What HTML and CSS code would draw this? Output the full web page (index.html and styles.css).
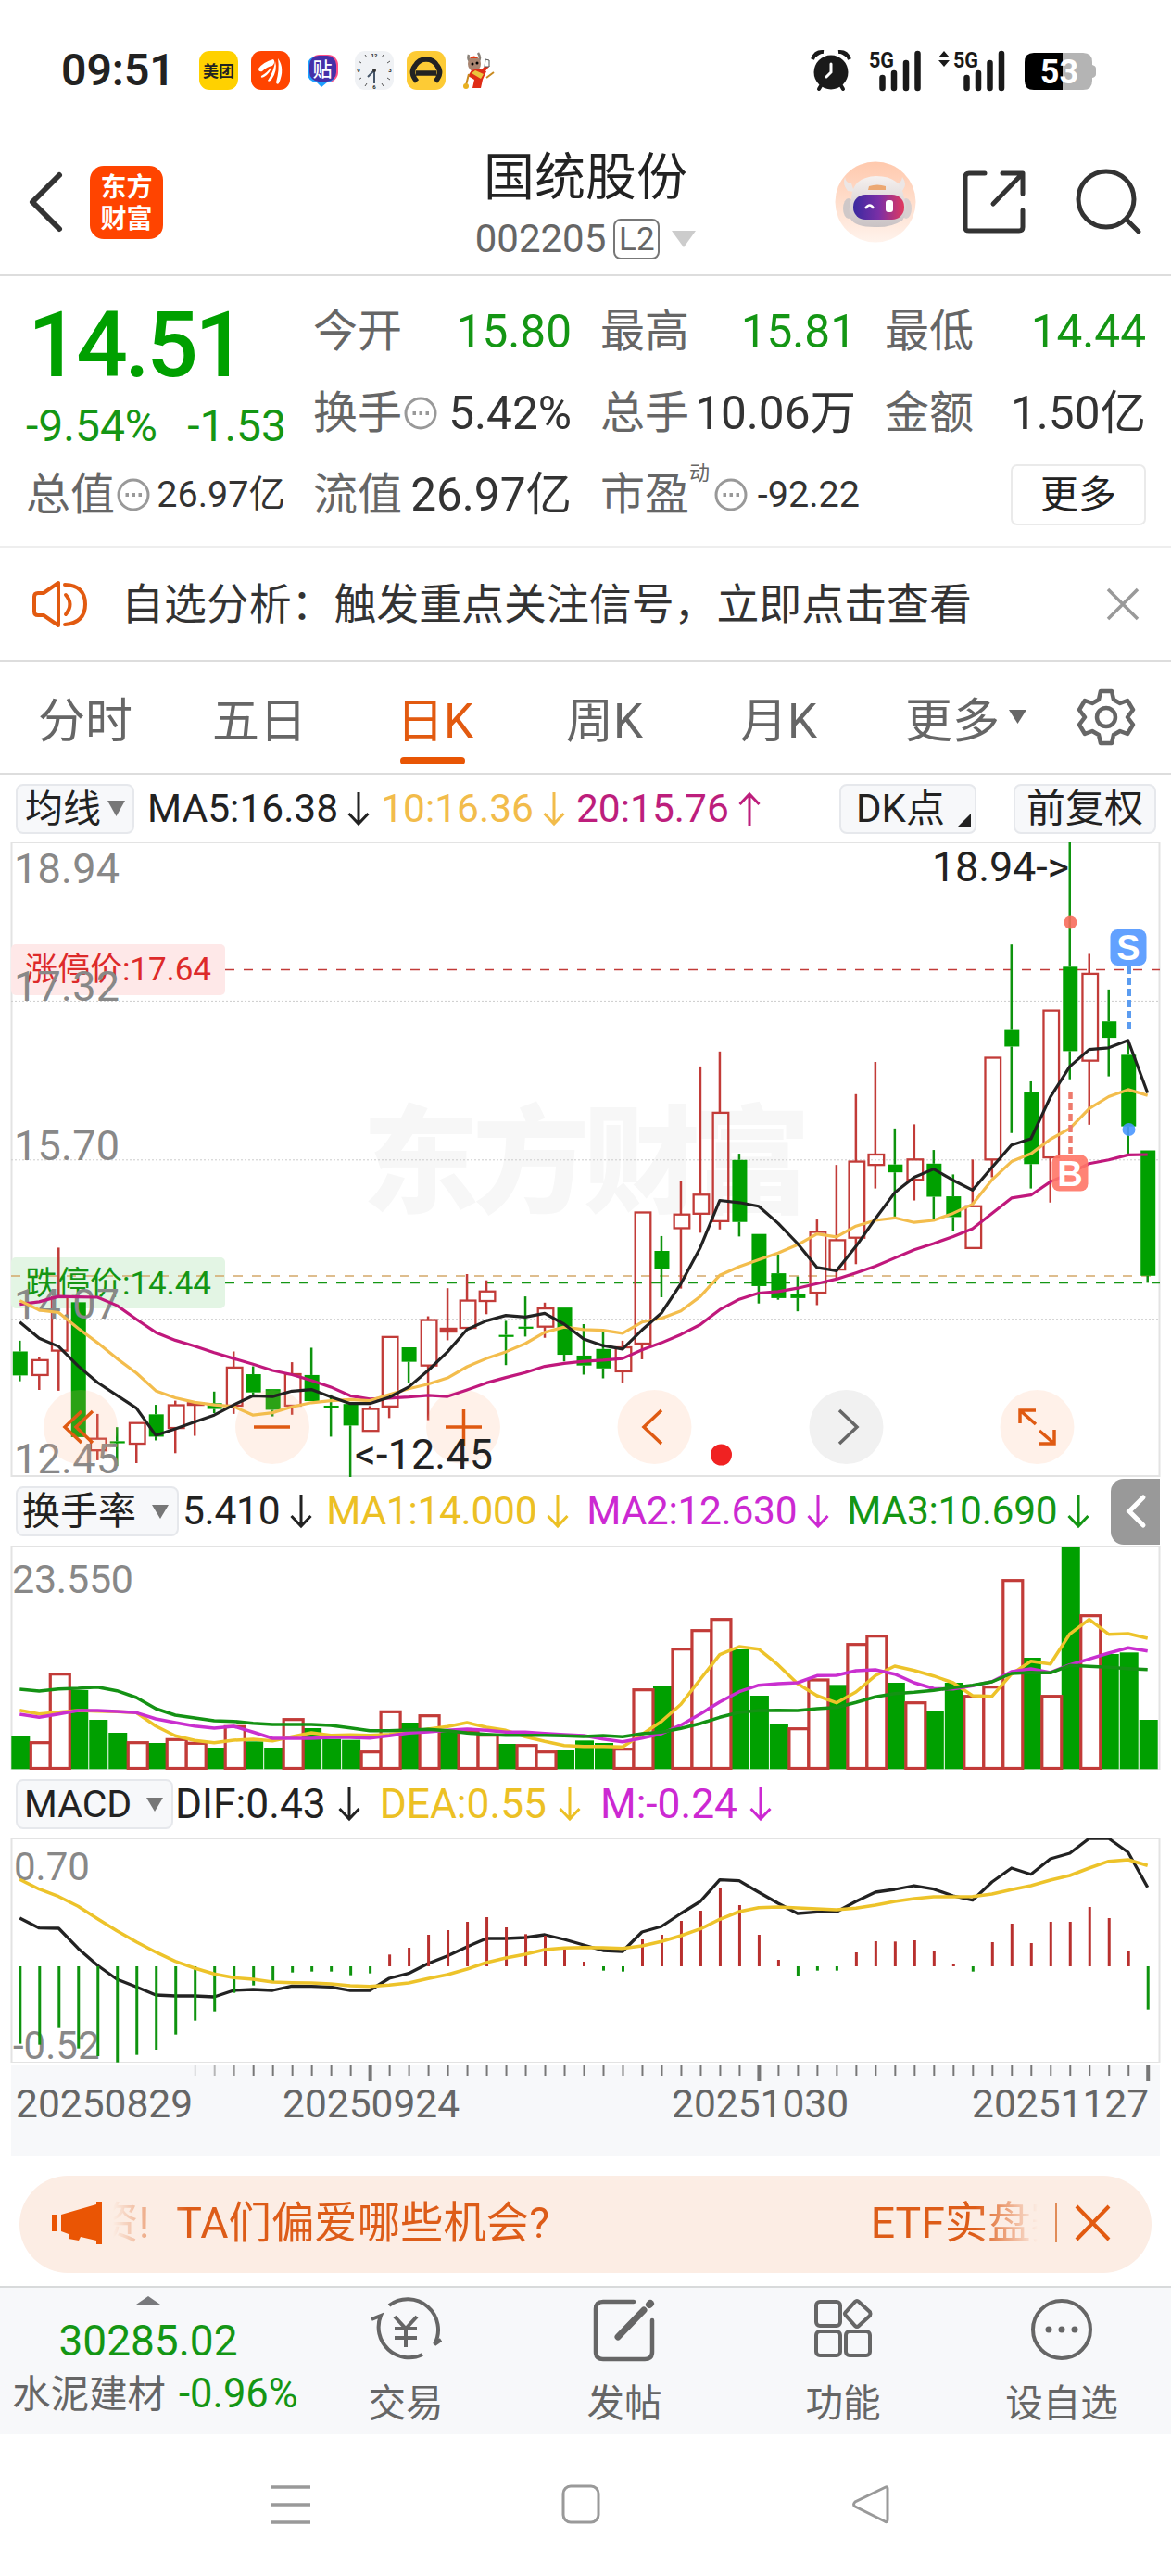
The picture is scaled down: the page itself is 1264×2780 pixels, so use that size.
FILE: index.html
```html
<!DOCTYPE html>
<html lang="zh-CN">
<head>
<meta charset="utf-8">
<title>国统股份 002205</title>
<link rel="stylesheet" href="styles.css">
</head>
<body>
<div class="status">
  <span class="clock">09:51</span>
  <div class="notices">
    <svg width="42" height="42"><rect width="42" height="42" rx="11" fill="#ffd100"/><text x="21" y="27.500" class="cjk" font-size="17" font-weight="700" text-anchor="middle" fill="#222">美团</text></svg>
    <svg width="42" height="42"><rect width="42" height="42" rx="11" fill="#ff4400"/><path d="M8 19Q13 12 24 9Q27 12 23 16Q17 17 12 22Q8 23 8 19ZM29 8Q37 19 30 35Q28 37 27 34Q31 20 29 8ZM26 11Q29 21 22 31Q19 34 18 32Q25 21 26 11ZM22 17Q21 24 14 28Q10 30 11 27Q18 23 22 17Z" fill="#fff"/></svg>
    <svg width="42" height="42"><rect x="7" y="4" width="31" height="30" rx="11" fill="#ff4d86"/><path d="M5 16Q5 6 16 6H26Q35 6 35 16V24Q35 33 26 34L20 39L15 34Q5 33 5 24Z" fill="#1ea0ff"/><rect x="7" y="5" width="29" height="28" rx="10" fill="#4530a8"/><text x="21" y="27" class="cjk" font-size="21" font-weight="500" text-anchor="middle" fill="#fff">贴</text></svg>
    <svg width="42" height="42"><rect width="42" height="42" rx="11" fill="#f0f2f5"/><g stroke="#555" stroke-width="1"><path d="M11 4l2 3M31 4l-2 3M4 11l3 2M38 11l-3 2M4 31l3-2M38 31l-3-2M11 38l2-3M31 38l-2-3"/></g><g class="num" font-size="6" font-weight="700" text-anchor="middle" fill="#222"><text x="21" y="7">12</text><text x="38" y="23">3</text><text x="21" y="41">6</text><text x="4" y="23">9</text></g><path d="M21 21V35M21 21L14 28" stroke="#46566a" stroke-width="2"/><circle cx="21" cy="21" r="2" fill="#333"/></svg>
    <svg width="42" height="42"><rect width="42" height="42" rx="11" fill="#fdcb35"/><path d="M11 33Q3 24 9 16Q13 9 21 9Q29 9 33 16Q39 24 31 33M10 24H32" fill="none" stroke="#222" stroke-width="5.500"/></svg>
    <svg width="42" height="42"><path d="M11 4Q9 10 14 12M21 2Q25 8 21 12" fill="none" stroke="#8a8178" stroke-width="2.500"/><ellipse cx="17" cy="14" rx="7" ry="8" fill="#a98571"/><path d="M12 8Q17 3 21 8Z" fill="#e23a14"/><path d="M14 21Q23 18 30 22L26 31L24 40H15L17 31L10 27Z" fill="#df2c16"/><path d="M14 24L24 30L27 25L18 21Z" fill="#eac33e"/><path d="M26 22L32 15" stroke="#df2c16" stroke-width="4"/><path d="M29 9l4 1v7h-5z" fill="#fff" stroke="#555"/><path d="M30 29l8-6M8 37l3-12" stroke="#c88a20" stroke-width="2"/><circle cx="8" cy="38" r="3" fill="#e8b020"/><circle cx="15" cy="14" r="1.500"/><circle cx="20" cy="13" r="1.500"/></svg>
  </div>
  <div class="signals">
    <svg width="44" height="44"><circle cx="22" cy="24" r="18.500" fill="#1a1a1a"/><path d="M2 10Q5 1 14 2M42 10Q39 1 30 2" stroke="#1a1a1a" stroke-width="4" fill="#1a1a1a"/><path d="M12 37l-3 5M32 37l3 5" stroke="#1a1a1a" stroke-width="4" stroke-linecap="round"/><path d="M22 15v9l-5 5" fill="none" stroke="#fff" stroke-width="3" stroke-linecap="round"/></svg>
    <svg width="58" height="44"><text x="0" y="19" class="num" font-size="24" font-weight="700" textLength="27" lengthAdjust="spacingAndGlyphs" fill="#1a1a1a">5G</text><path d="M14.500 30v11M27 25v16M40 14v27M52.500 4v37" stroke="#1a1a1a" stroke-width="6.500" stroke-linecap="round"/></svg>
    <svg width="74" height="44"><path d="M0 8l6-7l6 7zM0 11l6 7l6-7z" fill="#1a1a1a"/><text x="16" y="19" class="num" font-size="24" font-weight="700" textLength="27" lengthAdjust="spacingAndGlyphs" fill="#1a1a1a">5G</text><path d="M30.500 30v11M43 25v16M55.500 14v27M68 4v37" stroke="#1a1a1a" stroke-width="6.500" stroke-linecap="round"/></svg>
    <svg class="battery" width="78" height="40"><path d="M10 0H41V40H10Q0 40 0 30V10Q0 0 10 0Z" fill="#000"/><path d="M41 0H63Q73 0 73 10V13Q77 14 77 17V23Q77 26 73 27V30Q73 40 63 40H41Z" fill="#b4b4b4"/><text x="37.500" y="33" class="num" font-size="36" font-weight="700" text-anchor="middle" fill="#fff">53</text></svg>
  </div>
</div>

<header class="header">
  <div class="header-left">
    <svg width="38" height="68"><path d="M34 5L5 34L34 63" fill="none" stroke="#333" stroke-width="6" stroke-linecap="round" stroke-linejoin="round"/></svg>
    <div class="logo"><span>东方</span><span>财富</span></div>
  </div>
  <div class="header-title">
    <h1>国统股份</h1>
    <div class="code"><span>002205</span><i>L2</i><svg width="26" height="18"><path d="M0 0H26L13 18Z" fill="#ccc"/></svg></div>
  </div>
  <div class="header-right">
    <svg width="88" height="88">
      <defs><linearGradient id="halo" x2="0" y2="1"><stop stop-color="#ffc9ad"/><stop offset="1" stop-color="#fff3ec"/></linearGradient><linearGradient id="visor"><stop stop-color="#3a2aa0"/><stop offset=".5" stop-color="#7a2fa6"/><stop offset="1" stop-color="#e23a5e"/></linearGradient><linearGradient id="helmet" x2="0" y2="1"><stop stop-color="#f6f1ef"/><stop offset="1" stop-color="#c9c2c4"/></linearGradient></defs>
      <circle cx="44" cy="44" r="43.500" fill="url(#halo)"/>
      <ellipse cx="15" cy="51" rx="6" ry="11" fill="#cfc8c8"/><ellipse cx="77" cy="51" rx="6" ry="11" fill="#d8d0d0"/>
      <path d="M11 17Q12 24 18 24L21 33L14 32Q8 25 11 17ZM73 17Q72 24 67 24L66 33L73 32Q79 25 73 17Z" fill="#ece6e5"/>
      <path d="M18 40Q19 17 45 16Q72 16 75 40Q80 55 73 64Q60 72 43 71Q22 71 17 62Q14 52 18 40Z" fill="url(#helmet)"/>
      <path d="M37 27Q46 24 55 27V31H36Z" fill="#eca873"/>
      <rect x="20" y="36" width="55" height="27" rx="13" fill="url(#visor)"/>
      <path d="M33 51Q38 44 42 51" fill="none" stroke="#fff" stroke-width="2.500"/><rect x="55" y="42" width="8" height="13" rx="3" fill="#fff"/>
    </svg>
    <svg class="share" width="70" height="70"><path d="M25 4H8Q4 4 4 8V63Q4 66 8 66H62Q66 66 66 62V44M44 4H66V26M65 5L34 37" fill="none" stroke="#333" stroke-width="5" stroke-linecap="round" stroke-linejoin="round"/></svg>
    <svg width="72" height="72"><circle cx="34" cy="33" r="30" fill="none" stroke="#333" stroke-width="5"/><path d="M56 55L69 68" stroke="#333" stroke-width="5" stroke-linecap="round"/></svg>
  </div>
</header>

<section class="quote">
  <div class="summary">
    <div class="price">14.51</div>
    <div class="change"><span>-9.54%</span><span>-1.53</span></div>
    <div class="cell small"><label>总值</label><svg class="hint" width="36" height="36"><use href="#hint"/></svg><b>26.97亿</b></div>
  </div>
  <div class="stats">
    <div class="cell up"><label>今开</label><b>15.80</b></div>
    <div class="cell up"><label>最高</label><b>15.81</b></div>
    <div class="cell up"><label>最低</label><b>14.44</b></div>
    <div class="cell"><label>换手</label><svg class="hint" width="36" height="36"><g id="hint" fill="none" stroke="#999"><circle cx="18" cy="18" r="16" stroke-width="3"/><path d="M9.500 18h3.500M16.500 18h3.500M23.500 18h3.500" stroke-width="4"/></g></svg><b>5.42%</b></div>
    <div class="cell"><label>总手</label><b>10.06万</b></div>
    <div class="cell"><label>金额</label><b>1.50亿</b></div>
    <div class="cell"><label>流值</label><b>26.97亿</b></div>
    <div class="cell small"><label>市盈<sup>动</sup></label><svg class="hint" width="36" height="36"><use href="#hint"/></svg><b>-92.22</b></div>
    <div class="cell"><button class="more">更多</button></div>
  </div>
</section>

<section class="alert">
  <svg width="62" height="52"><g fill="none" stroke="#e25a10" stroke-width="4" stroke-linejoin="round"><path d="M29 3V49L13 38H7Q3 38 3 34V18Q3 14 7 14H13Z"/><path d="M37 16Q46 26 37 37M36 5Q58 6 58 26Q58 46 36 48" stroke-linecap="round"/></g></svg>
  <span>自选分析：触发重点关注信号，立即点击查看</span>
  <svg width="36" height="36"><path d="M2 2L34 34M34 2L2 34" stroke="#999" stroke-width="3.500"/></svg>
</section>

<nav class="tabs">
  <a>分时</a><a>五日</a><a class="on">日K</a><a>周K</a><a>月K</a><a>更多<svg width="20" height="16"><path d="M0 0H19L9.500 15Z" fill="#666"/></svg></a>
  <svg class="gear" width="62" height="62" viewBox="0 0 62 62"><g fill="none" stroke="#666" stroke-width="4.500" stroke-linejoin="round"><path d="M25 3H37L39 12L46 16L54 13L60 23L54 31L60 39L54 49L46 46L39 50L37 59H25L23 50L16 46L8 49L2 39L8 31L2 23L8 13L16 16L23 12Z"/><circle cx="31" cy="31" r="10"/></g></svg>
</nav>

<div class="legend ma">
  <span class="pill">均线<svg width="19" height="17"><path d="M0 0H19L9.500 17Z" fill="#777"/></svg></span>
  <span class="val">MA5:16.38<svg class="arrow"><use href="#down"/></svg></span>
  <span class="val gold">10:16.36<svg class="arrow"><use href="#down"/></svg></span>
  <span class="val plum">20:15.76<svg class="arrow"><use href="#up"/></svg></span>
  <span class="pill dk">DK点<svg width="15" height="15"><path d="M15 0V15H0Z" fill="#222"/></svg></span>
  <span class="pill adj">前复权</span>
</div>
<svg class="panel" id="kline" width="1264" height="685" viewBox="0 909 1264 685"></svg>

<div class="legend turnover">
  <span class="pill">换手率<svg width="18" height="15"><path d="M0 0H18L9 15Z" fill="#777"/></svg></span>
  <span class="val">5.410<svg class="arrow"><use href="#down"/></svg></span>
  <span class="val yellow">MA1:14.000<svg class="arrow"><use href="#down"/></svg></span>
  <span class="val violet">MA2:12.630<svg class="arrow"><use href="#down"/></svg></span>
  <span class="val green">MA3:10.690<svg class="arrow"><use href="#down"/></svg></span>
  <span class="drawer"><svg width="22" height="36"><path d="M19 3L4 18L19 33" fill="none" stroke="#fff" stroke-width="5" stroke-linecap="round"/></svg></span>
</div>
<svg class="panel" id="volume" width="1264" height="242" viewBox="0 1668 1264 242"></svg>

<div class="legend macd">
  <span class="pill">MACD<svg width="18" height="15"><path d="M0 0H18L9 15Z" fill="#777"/></svg></span>
  <span class="val">DIF:0.43<svg class="arrow"><use href="#down"/></svg></span>
  <span class="val yellow">DEA:0.55<svg class="arrow"><use href="#down"/></svg></span>
  <span class="val violet">M:-0.24<svg class="arrow"><use href="#down"/></svg></span>
</div>
<svg class="panel" id="macd" width="1264" height="242" viewBox="0 1984 1264 242"></svg>
<svg class="panel" id="axis" width="1264" height="101" viewBox="0 2226 1264 101"></svg>

<div class="promo">
  <svg width="54" height="46"><path d="M0 14H5V32H0ZM10 14L48 3V0H54V46H48V42L31 38L29 42L18 40V35L10 32Z" fill="#ea5504"/></svg>
  <div class="ticker"><span class="tail">资!</span><span>TA们偏爱哪些机会?</span><span class="next">ETF实盘赛</span></div>
  <svg width="60" height="46"><path d="M2 2V44" stroke="#d96b2a" stroke-width="1.500"/><path d="M24 5L59 41M59 5L24 41" stroke="#e25a10" stroke-width="4"/></svg>
</div>

<footer class="dock">
  <div class="sector">
    <svg width="26" height="9"><path d="M0 9L13 0L26 9Z" fill="#78797c"/></svg>
    <b>30285.02</b>
    <p>水泥建材<em>-0.96%</em></p>
  </div>
  <a><svg width="78" height="70"><g fill="none" stroke="#666" stroke-width="4"><path d="M21 8A33 33 0 0 1 70 50L77 45M57 61A33 33 0 0 1 12 19L2 23M27 20L39 33L51 20M27 33H51M27 43H51M39 33V53"/></g></svg>交易</a>
  <a><svg width="70" height="70"><g fill="none" stroke="#666" stroke-width="4.500" stroke-linecap="round"><path d="M45 4H12Q4 4 4 12V58Q4 66 12 66H57Q65 66 65 58V24"/><path d="M28 42L56 13" stroke-width="7"/><path d="M62 7L63 6" stroke-width="8"/></g></svg>发帖</a>
  <a><svg width="62" height="66"><g fill="none" stroke="#666" stroke-width="4"><rect x="2" y="4" width="26" height="26" rx="4"/><rect x="2" y="36" width="26" height="26" rx="4"/><rect x="34" y="36" width="26" height="26" rx="4"/><path d="M44 4Q46 2 48 4L60 15Q61 17 60 19L48 30Q46 32 44 30L34 19Q32 17 34 15Z"/></g></svg>功能</a>
  <a><svg width="68" height="68"><circle cx="34" cy="34" r="31" fill="none" stroke="#666" stroke-width="4"/><g fill="#666"><circle cx="20" cy="34" r="3.500"/><circle cx="34" cy="34" r="3.500"/><circle cx="48" cy="34" r="3.500"/></g></svg>设自选</a>
</footer>

<div class="sysnav">
  <svg width="42" height="44"><path d="M0 3H42M0 22H42M0 41H42" stroke="#999" stroke-width="3.500"/></svg>
  <svg width="42" height="44"><rect x="2" y="2" width="38" height="39" rx="8" fill="none" stroke="#999" stroke-width="3"/></svg>
  <svg width="42" height="44"><path d="M37 3Q39 2 39 5V38Q39 42 36 40L4 24Q1 22 4 19Z" fill="none" stroke="#999" stroke-width="3"/></svg>
</div>

<svg width="0" height="0" class="defs"><defs>
  <path id="down" d="M12 0V34M1.500 23L12 34L22.500 23" fill="none" stroke="currentColor" stroke-width="3"/>
  <path id="up" d="M12 36V2M1.500 13L12 2L22.500 13" fill="none" stroke="currentColor" stroke-width="3"/>
</defs></svg>
<script src="charts.js"></script>
</body>
</html>
```

FILE: styles.css
```css
* { box-sizing: border-box; }
body { margin: 0; width: 1264px; background: #fff; color: #222; font-family: Roboto, "Noto Sans CJK SC", sans-serif; }
svg { display: block; flex: none; overflow: visible; }
b, i, em { font-weight: 400; font-style: normal; }
.num { font-family: Roboto, sans-serif; }
.cjk { font-family: "Noto Sans CJK SC", sans-serif; }
.defs { position: absolute; }

.status { display: flex; align-items: center; height: 140px; padding: 12px 80px 0 66px; }
.clock { width: 149px; font-size: 48px; font-weight: 600; line-height: 46px; }
.notices { display: flex; gap: 14px; }
.signals { display: flex; align-items: center; margin-left: auto; }
.signals svg { margin-right: 19px; }
.signals svg:nth-child(2) { margin-right: 17px; }
.signals svg.battery { margin-right: 0; margin-top: 2px; }

.header { display: grid; grid-template-columns: 400px 1fr 400px; height: 158px; border-bottom: 2px solid #ddd; align-items: center; }
.header-left { display: flex; align-items: center; padding-left: 30px; gap: 29px; }
.logo { display: flex; flex-direction: column; align-items: center; justify-content: center; width: 79px; height: 79px; border-radius: 15px; background: #ff4400; color: #fff; font: 700 28px/34px "Noto Sans CJK SC", sans-serif; padding-bottom: 3px; }
.header-title { display: flex; flex-direction: column; align-items: center; padding-top: 8px; }
h1 { margin: 0; font-weight: 400; font-size: 55px; line-height: 66px; }
.code { display: flex; align-items: center; margin-top: 6px; font-size: 42px; line-height: 56px; color: #666; }
.code i { width: 50px; height: 44px; margin: 0 13px 0 8px; border: 2px solid #777; border-radius: 8px; font-size: 35px; line-height: 42px; text-align: center; }
.header-right { display: flex; align-items: center; justify-content: flex-end; padding-right: 32px; }
.share { margin: 0 52px 0 49px; }

.quote { display: flex; height: 293px; padding: 16px 26px 0 28px; border-bottom: 2px solid #eee; }
.summary { width: 310px; }
.price { height: 106px; padding-left: 2px; font-size: 98px; font-weight: 500; line-height: 118px; letter-spacing: -3.5px; color: #00a000; }
.change { display: flex; justify-content: space-between; width: 281px; height: 70px; padding-top: 5px; font-size: 48px; line-height: 70px; color: #149614; }
.summary .cell { width: 280px; }
.stats { display: grid; grid-template-columns: 279px 276px 282px; grid-auto-rows: 88px; column-gap: 31px; height: 264px; }
.cell { display: flex; align-items: center; height: 88px; font-size: 48px; line-height: 60px; }
.cell label { color: #666; position: relative; }
.cell b { margin-left: auto; color: #333; font-size: 49.5px; }
.cell.up b { color: #149614; }
.cell.small b { font-size: 39.5px; }
.stats .cell.small { width: 280px; }
.hint { margin-left: 2px; }
.cell sup { position: absolute; left: 96px; top: -8px; font-size: 22px; line-height: 30px; }
label:has(sup) + .hint { margin-left: 27px; }
.more { width: 146px; height: 66px; margin-left: auto; border: 2px solid #eaeaea; border-radius: 7px; background: #fff; font: inherit; font-size: 41px; line-height: 58px; color: #222; padding: 0; }

.alert { display: flex; align-items: center; height: 123px; padding: 0 34px; border-bottom: 2px solid #ddd; font-size: 45.9px; color: #333; }
.alert span { flex: 1; margin-left: 35px; padding-bottom: 7px; }

.tabs { display: grid; grid-template-columns: 188px 199px 183px 188px 178px 186px 62px; align-items: center; height: 122px; padding-left: 41px; border-bottom: 2px solid #ddd; font-size: 51px; color: #666; }
.tabs a { display: flex; align-items: center; height: 120px; position: relative; white-space: nowrap; }
.tabs a svg { margin-left: 10px; }
.tabs .on { color: #e25a10; }
.tabs .on::after { content: ""; position: absolute; left: 4px; bottom: 9px; width: 70px; height: 8px; border-radius: 4px; background: #e85504; }

.legend { display: flex; align-items: center; font-size: 42.5px; line-height: 50px; color: #222; white-space: nowrap; }
.ma { height: 73px; padding: 0 16px 0 17px; }
.turnover, .macd { height: 74px; padding-left: 17px; }
.pill { display: flex; flex: none; align-items: center; justify-content: space-between; height: 54px; padding: 0 10px; border: 2px solid #e6e8ec; border-radius: 8px; background: #f7f8fa; font-size: 41px; line-height: 48px; }
.ma .pill:first-child { width: 128px; margin-right: 14px; padding: 0 8px 0 8px; }
.val { display: flex; align-items: center; flex: none; }
.arrow { width: 24px; height: 36px; margin-left: 10px; }
.ma .val { margin-right: 12px; }
.ma .dk { width: 148px; margin-left: auto; padding: 0 4px 0 16px; font-size: 42px; }
.dk svg { align-self: flex-end; margin-bottom: 5px; }
.ma .adj { width: 154px; margin-left: 40px; padding: 0 12px; font-size: 42px; }
.turnover .pill { width: 176px; margin-right: 4px; padding: 0 9px 0 5px; }
.turnover .val { margin-right: 19px; font-size: 42.5px; letter-spacing: -.3px; }
.turnover .val .arrow { margin-left: 11px; }
.turnover .val:nth-child(2) { margin-right: 15px; }
.turnover .val:nth-child(5) { margin-right: 0; }
.drawer { display: flex; align-items: center; justify-content: center; width: 53px; height: 71px; margin-left: auto; margin-right: 12px; border-radius: 14px 0 0 14px; background: #999; }
.macd .pill { width: 170px; margin-right: 2px; padding: 0 9px 0 7px; }
.macd .val { margin-right: 21px; font-size: 44.3px; }
.macd .arrow { margin-left: 13px; }
.gold { color: #f2bc4b; }
.plum { color: #bd1e7c; }
.yellow { color: #ecc024; }
.violet { color: #cc29d2; }
.green { color: #149614; }

.panel { font-family: Roboto, "Noto Sans CJK SC", sans-serif; overflow: hidden; }

.promo { display: flex; align-items: center; width: 1222px; height: 105px; margin: 21px auto 14px; padding: 0 45px 3px 35px; border-radius: 53px; background: #fcede4; color: #dd5c18; }
.ticker { display: flex; flex: 1; overflow: hidden; margin: 0 10px 0 12px; font-size: 46.4px; line-height: 66px; white-space: nowrap; -webkit-mask-image: linear-gradient(90deg, transparent 0, #000 80px, #000 calc(100% - 75px), transparent calc(100% - 8px)); mask-image: linear-gradient(90deg, transparent 0, #000 80px, #000 calc(100% - 75px), transparent calc(100% - 8px)); }
.tail { margin: 0 29px 0 -19px; }
.next { margin-left: auto; margin-right: -31px; }

.dock { display: flex; height: 160px; border-top: 2px solid #d8dadb; background: #f7f8fa; }
.sector { display: flex; flex-direction: column; align-items: center; width: 320px; padding-top: 9px; color: #149614; }
.sector b { margin-top: 11px; font-size: 46px; line-height: 56px; }
.sector p { display: flex; align-items: baseline; margin: 2px 0 0 15px; font-size: 41.4px; line-height: 56px; color: #666; white-space: nowrap; }
.sector em { margin-left: 14px; font-size: 43.5px; color: #149614; }
.dock a { display: flex; flex-direction: column; align-items: center; width: 236px; font-size: 40.6px; line-height: 50px; color: #666; }
.dock a svg { height: 70px; margin: 11px 0 19px; }

.sysnav { display: flex; justify-content: space-between; height: 152px; padding: 54px 303px 0 293px; }
```

FILE: charts.js
```js
const SVG = 'http://www.w3.org/2000/svg';
const COUNT = 59, STEP = 20.99, FIRST = 21.3;
const GREEN = '#00a000', RED = '#c23b38';
const X = i => FIRST + i * STEP;

function add(parent, name, attrs, text) {
  const el = document.createElementNS(SVG, name);
  for (const k in attrs) el.setAttribute(k, attrs[k]);
  if (text) el.textContent = text;
  parent.appendChild(el);
  return el;
}
function curve(svg, values, y, color, width) {
  add(svg, 'polyline', { points: values.map((v, i) => X(i).toFixed(1) + ',' + y(v).toFixed(1)).join(' '), fill: 'none', stroke: color, 'stroke-width': width, 'stroke-linejoin': 'round' });
}
function label(svg, x, y, text, size, color, extra) {
  add(svg, 'text', Object.assign({ x, y, 'font-size': size, fill: color }, extra), text);
}
function hline(svg, y, color, dash, from = 12, w = 1.5) {
  add(svg, 'line', { x1: from, x2: 1252, y1: y, y2: y, stroke: color, 'stroke-width': w, 'stroke-dasharray': dash });
}
function frame(svg, top, bottom) {
  add(svg, 'rect', { x: 12.5, y: top + 1, width: 1239, height: bottom - top - 2, fill: 'none', stroke: '#e3e3e3', 'stroke-width': 2 });
}

/* Daily candles: colour, body top, body bottom, high, low (chart units, 2.24 per pixel) */
const candles = `g 1251 1309 1225 1323|r 1272 1308 1265 1344|r 1120 1249 1000 1346|g 1132 1458 1132 1458|r 1462 1490 1402 1514|g 1468 1472 1434 1528|r 1424 1474 1424 1521|g 1403 1457 1380 1466|r 1381 1436 1370 1497|r 1376 1380 1374 1455|g 1376 1390 1348 1400|r 1290 1382 1251 1402|g 1306 1350 1287 1355|g 1342 1392 1342 1408|r 1306 1382 1277 1404|g 1308 1371 1242 1371|g 1382 1386 1355 1457|g 1378 1430 1378 1556|r 1390 1443 1383 1443|r 1216 1384 1216 1412|g 1241 1276 1241 1328|r 1175 1285 1166 1417|r 1196 1203 1098 1224|r 1128 1194 1064 1194|r 1106 1129 1079 1161|g 1211 1215 1177 1284|g 1191 1195 1118 1215|r 1147 1191 1133 1218|g 1145 1259 1145 1275|g 1261 1285 1185 1307|g 1245 1292 1204 1316|r 1241 1299 1225 1328|r 915 1232 915 1270|g 1008 1052 972 1120|r 920 953 840 1099|r 872 918 562 964|r 674 936 526 956|g 788 938 773 973|g 967 1093 967 1135|g 1062 1122 1017 1126|g 1112 1122 1070 1154|r 962 1109 932 1139|r 982 1053 800 1075|r 792 976 629 1040|r 775 800 551 857|g 799 818 712 925|r 787 836 702 886|g 797 877 764 930|g 876 926 823 960|r 900 1001 787 1001|r 541 787 541 830|g 474 514 267 723|g 625 798 598 857|r 427 782 427 891|g 321 525 20 593|r 338 548 290 703|g 453 493 376 586|g 534 707 500 775|g 765 1068 765 1085`.split('|').map(s => s.split(' '));
const ma5 = [1180,1219,1239,1286,1326,1357,1388,1454,1438,1421,1405,1380,1358,1360,1347,1343,1361,1377,1377,1362,1337,1297,1252,1198,1177,1164,1168,1159,1185,1221,1237,1245,1199,1158,1087,1000,886,891,900,941,990,1048,1056,997,930,867,830,810,837,861,806,752,737,636,562,521,517,499,626];
const ma10 = [1128,1151,1157,1195,1230,1268,1303,1346,1363,1374,1380,1384,1405,1399,1385,1375,1370,1367,1370,1355,1341,1330,1315,1288,1268,1252,1232,1205,1192,1198,1200,1207,1180,1171,1153,1118,1067,1046,1029,1013,993,967,974,948,934,928,939,934,917,895,836,792,773,738,712,664,635,618,632];
const ma20 = [1137,1131,1118,1119,1120,1140,1173,1205,1224,1238,1254,1268,1282,1297,1307,1321,1337,1358,1366,1364,1361,1357,1360,1344,1327,1314,1302,1287,1280,1275,1272,1268,1247,1230,1210,1186,1150,1125,1110,1106,1098,1087,1076,1061,1045,1025,1005,990,973,954,917,880,873,841,820,797,788,776,775];

(function kline() {
  const svg = document.getElementById('kline');
  const y = v => 900 + v / 2.24;
  label(svg, 391, 1299, '东方财富', 126, '#f7f7f7', { 'font-weight': 900, textLength: 484, class: 'cjk' });
  frame(svg, 908, 1594);
  [1080.4, 1251.8, 1423.7].forEach(v => hline(svg, v, '#ccc', '2 2', 12, 1));
  const plate = { x: 12, width: 231, height: 55, rx: 5 };
  hline(svg, 1046.4, '#c23b38', '10 10', 243);
  hline(svg, 1384.4, '#149614', '10 10', 243);
  add(svg, 'rect', { ...plate, y: 1019, fill: '#fee8e8' });
  add(svg, 'rect', { ...plate, y: 1357, fill: '#e3f5e4' });
  hline(svg, 1377, '#d3a869', '10 10');
  label(svg, 27, 1057.5, '涨停价:17.64', 35, '#dd2a2a', { textLength: 201 });
  label(svg, 27, 1396.5, '跌停价:14.44', 35, '#149614', { textLength: 201 });

  candles.forEach(([c, top, bottom, high, low], i) => {
    const x = X(i), t = y(+top), b = y(+bottom);
    const stroke = c === 'g' ? '#0e930e' : RED;
    const wick = (a, z) => z > a && add(svg, 'line', { x1: x, x2: x, y1: a, y2: z, stroke, 'stroke-width': 2.5 });
    wick(y(+high), t);
    wick(b, y(+low));
    if (c === 'g') add(svg, 'rect', { x: x - 7.5, y: t, width: 16, height: Math.max(b - t, 2.2), fill: GREEN });
    else add(svg, 'rect', { x: x - 7.3, y: t, width: 16.6, height: b - t, fill: b - t < 4 ? RED : 'none', stroke: RED, 'stroke-width': 2.3 });
  });

  [['18.94', 953], ['17.32', 1080], ['15.70', 1252], ['14.07', 1423], ['12.45', 1590]]
    .forEach(([t, v]) => label(svg, 15, v, t, 45, '#888', { textLength: 114 }));

  [[87, 0], [294, 0], [500, 0], [706.5, 0], [913.5, 1], [1119.5, 0]].forEach(([cx, grey]) =>
    add(svg, 'circle', { cx, cy: 1540, r: 40, fill: grey ? '#bbb' : '#ffab7a', 'fill-opacity': grey ? .2 : .17 }));
  const icons = { fill: 'none', stroke: '#df5a12', 'stroke-width': 3.5 };
  add(svg, 'path', { ...icons, d: 'M88 1523L70 1540L88 1557M100 1523L82 1540L100 1557M274 1540H313M481 1540H520M500.500 1521V1560M714 1522L695 1540L714 1558M1118 1537L1101 1522M1101 1536V1522H1118M1122 1544L1138 1558M1138 1543V1558H1121' });
  add(svg, 'path', { ...icons, stroke: '#666', d: 'M906 1522L925 1540L906 1558' });

  curve(svg, ma20, y, '#c0187c', 3.2);
  curve(svg, ma10, y, '#f3bd4d', 3.2);
  curve(svg, ma5, y, '#222', 3.2);

  label(svg, 383, 1585, '<-12.45', 45, '#222', { textLength: 149 });
  label(svg, 1006, 951, '18.94->', 45, '#222', { textLength: 148 });
  add(svg, 'circle', { cx: 1155.4, cy: 995.5, r: 7, fill: '#f76d5c', 'fill-opacity': .9 });
  add(svg, 'circle', { cx: 1218.5, cy: 1219, r: 7, fill: '#4a97ff', 'fill-opacity': .9 });
  add(svg, 'circle', { cx: 778.5, cy: 1570, r: 11.5, fill: '#f02222' });
  add(svg, 'path', { d: 'M1218.500 1043V1112', stroke: '#5b9cf0', 'stroke-width': 5, 'stroke-dasharray': '8 4' });
  add(svg, 'path', { d: 'M1155.500 1178V1245', stroke: '#ee7a6c', 'stroke-width': 4.5, 'stroke-dasharray': '8 4' });
  [['S', 1198.5, 1003, '#62a1ff'], ['B', 1135.5, 1246.5, '#ff7666']].forEach(([t, x, v, fill]) => {
    add(svg, 'rect', { x, y: v, width: 39, height: 39, rx: 8, fill, 'fill-opacity': t === 'B' ? .9 : 1 });
    label(svg, x + 19.5, v + 33, t, 38, '#fff', { 'font-weight': 700, 'text-anchor': 'middle', 'font-family': 'Liberation Sans' });
  });
})();

/* Turnover bars share the candle order; values are 3 units per pixel */
const turnover = 'g852 r872 r650 g702 g798 g840 r872 g873 r862 r874 g888 r820 g868 g888 r797 g825 g860 g863 r902 r772 g807 r785 g830 r835 r848 g876 r881 r902 g897 g865 g873 r893 r701 g687 r569 r509 r473 g570 g720 g813 r827 r669 g685 r554 r527 g678 r743 g771 g678 r722 r692 r347 g597 r722 g237 r461 g585 g580 g798'.split(' ');
const tMa1 = [767,779,773,768,770,772,775,818,850,865,872,864,861,866,853,840,848,847,848,845,838,828,820,807,822,832,853,868,881,884,884,886,845,803,748,667,587,561,569,620,681,720,743,708,655,624,638,656,678,720,722,650,608,617,520,473,521,519,534];
const tMa2 = [780,790,779,768,768,771,775,795,807,818,825,819,838,858,858,858,855,855,857,850,841,837,832,828,832,838,838,842,846,849,860,869,857,843,815,779,740,707,686,681,678,655,654,639,636,650,678,697,698,688,674,642,633,645,620,601,582,565,575];
const tMa3 = [699,705,698,696,692,704,726,762,783,792,801,803,809,813,813,813,816,824,833,833,831,829,833,841,845,848,848,848,850,852,849,853,843,838,826,810,790,774,768,767,768,762,758,742,724,713,709,703,694,686,675,648,645,646,622,625,628,632,635];

(function volume() {
  const svg = document.getElementById('volume');
  const y = v => 1590 + v / 3, base = 1909.3;
  frame(svg, 1667, 1911);
  label(svg, 13, 1719, '23.550', 43, '#888', { textLength: 131 });
  // solid bars first, hollow bars overlap their edges
  turnover.forEach((s, i) => {
    const t = y(+s.slice(1)), x = X(i) - 9;
    if (s[0] === 'g') add(svg, 'rect', { x, y: t, width: 20, height: base - t, fill: GREEN });
  });
  turnover.forEach((s, i) => {
    const t = y(+s.slice(1)), x = X(i) - 9;
    if (s[0] === 'r') add(svg, 'rect', { x, y: t, width: 21, height: base - .8 - t, fill: '#fff', stroke: RED, 'stroke-width': 3.2 });
  });
  curve(svg, tMa1, y, '#edc32a', 3.5);
  curve(svg, tMa2, y, '#c92fcf', 3.5);
  curve(svg, tMa3, y, '#149214', 3.5);
})();

const hist = [857,860,806,872,897,917,893,876,827,782,752,692,668,660,626,623,623,635,629,568,546,504,489,462,447,480,502,507,552,591,620,623,519,504,459,426,351,408,504,585,638,620,620,561,525,526,522,558,600,623,528,468,531,462,462,414,450,555,746];
const dif = [450,482,483,548,603,648,673,699,702,702,705,684,681,684,670,671,673,684,684,645,629,597,572,543,516,516,513,504,519,537,555,558,495,477,435,396,326,329,366,402,435,430,430,396,366,357,345,356,378,392,333,288,308,258,240,192,192,237,350];
const dea = [325,356,380,412,452,491,527,560,590,612,631,643,648,657,659,660,663,669,671,667,660,646,633,615,594,579,567,552,547,545,546,548,540,526,507,485,454,429,416,414,417,420,423,418,408,396,387,381,381,380,372,358,345,327,312,288,266,261,280];

(function macd() {
  const svg = document.getElementById('macd');
  const y = v => 1920 + v / 3;
  frame(svg, 1983, 2227);
  label(svg, 15, 2029, '0.70', 42, '#888');
  label(svg, 14, 2221.5, '-0.52', 42, '#888');
  curve(svg, dif, y, '#222', 3.3);
  hist.forEach((v, i) => add(svg, 'line', { x1: X(i) + .5, x2: X(i) + .5, y1: 2122, y2: y(v), stroke: v > 606 ? '#0e930e' : '#b8302e', 'stroke-width': 3 }));
  curve(svg, dea, y, '#edc32a', 3.5);
})();

(function axis() {
  const svg = document.getElementById('axis');
  add(svg, 'rect', { x: 12, y: 2229, width: 1240, height: 98, fill: '#f7f8fa' });
  for (let i = 9; i < COUNT; i++) {
    const major = i % 20 === 18;
    add(svg, 'line', { x1: X(i) + .5, x2: X(i) + .5, y1: 2229, y2: major ? 2246 : 2240, stroke: '#777', 'stroke-width': major ? 4 : 2, opacity: Math.min(1, (i - 8) / 4) });
  }
  [['20250829', 17], ['20250924', 305], ['20251030', 725], ['20251127', 1049]].forEach(([t, x]) => label(svg, x, 2285, t, 42.5, '#666'));
})();
```
